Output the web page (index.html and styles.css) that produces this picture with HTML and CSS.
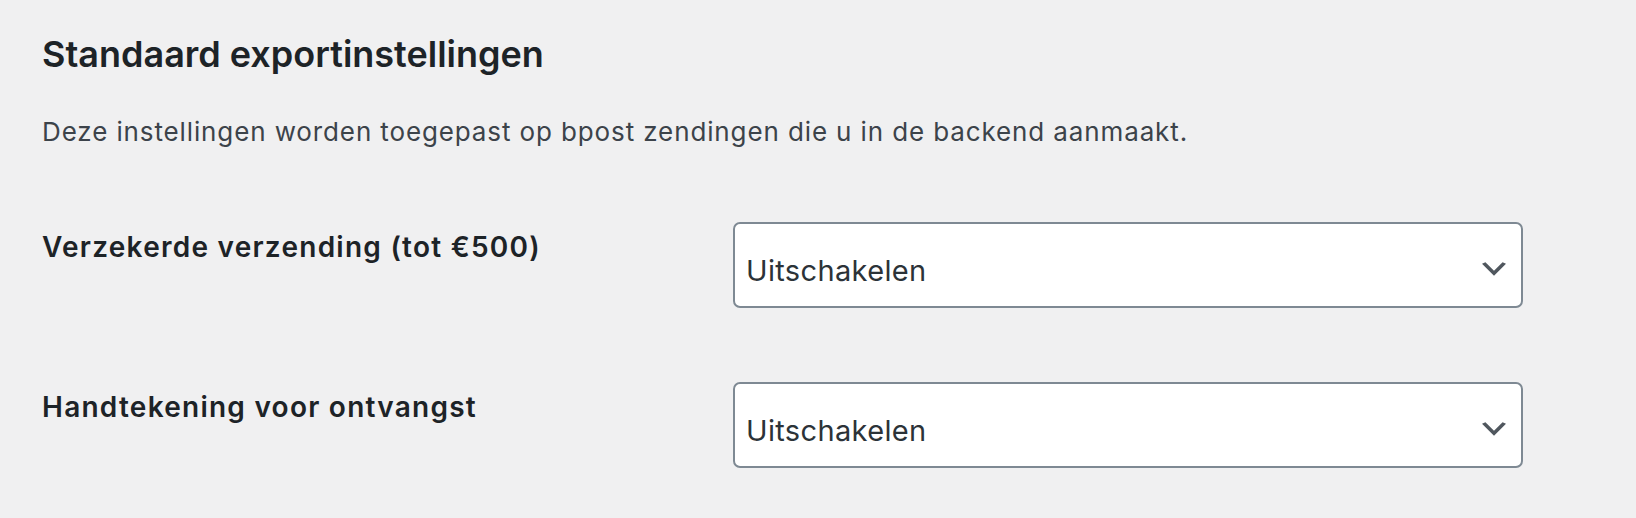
FILE: index.html
```html
<!DOCTYPE html>
<html lang="nl">
<head>
<meta charset="utf-8">
<title>Standaard exportinstellingen</title>
<link rel="stylesheet" href="styles.css">
</head>
<body>
<div class="wrap">
  <h2 class="title">Standaard exportinstellingen</h2>
  <p class="desc">Deze instellingen worden toegepast op bpost zendingen die u in de backend aanmaakt.</p>
  <div class="form-table">
    <label class="label" for="insured">Verzekerde verzending (tot €500)</label>
    <div class="field">
      <select id="insured" class="select"><option>Uitschakelen</option></select>
      <svg class="chev" viewBox="3 6 14 8" width="24" height="14" aria-hidden="true"><path d="M5 6l5 5 5-5 2 1-7 7-7-7 2-1z"/></svg>
    </div>
    <label class="label" for="signature">Handtekening voor ontvangst</label>
    <div class="field">
      <select id="signature" class="select"><option>Uitschakelen</option></select>
      <svg class="chev" viewBox="3 6 14 8" width="24" height="14" aria-hidden="true"><path d="M5 6l5 5 5-5 2 1-7 7-7-7 2-1z"/></svg>
    </div>
  </div>
</div>
</body>
</html>
```
FILE: styles.css
```css
html, body {
  margin: 0;
  background: #f0f0f1;
}
body {
  font-family: Inter, "Noto Sans", "Liberation Sans", sans-serif;
  color: #3c434a;
}
.wrap {
  padding: 32px 0 0 42px;
}
.title {
  margin: 0;
  font-size: 36px;
  line-height: 44px;
  font-weight: 600;
  color: #1d2327;
}
.desc {
  margin: 38px 0 0;
  font-size: 26px;
  line-height: 36px;
  letter-spacing: 0.88px;
  color: #3c434a;
}
.form-table {
  display: grid;
  grid-template-columns: 691px 790px;
  row-gap: 74px;
  align-items: start;
  margin-top: 72px;
}
.label {
  margin-top: 7px;
  font-size: 28px;
  line-height: 36px;
  font-weight: 600;
  letter-spacing: 1.25px;
  color: #1d2327;
}
.field {
  position: relative;
  height: 86px;
}
.select {
  appearance: none;
  -webkit-appearance: none;
  box-sizing: border-box;
  width: 790px;
  height: 86px;
  margin: 0;
  padding: 10px 60px 0 11px;
  border: 2px solid #7e8993;
  border-radius: 7px;
  background: #fff;
  font-family: Inter, "Noto Sans", "Liberation Sans", sans-serif;
  font-size: 29px;
  letter-spacing: 0.35px;
  color: #2c3338;
}
.chev {
  position: absolute;
  right: 17px;
  top: 40px;
  fill: #50575e;
  pointer-events: none;
}
```
